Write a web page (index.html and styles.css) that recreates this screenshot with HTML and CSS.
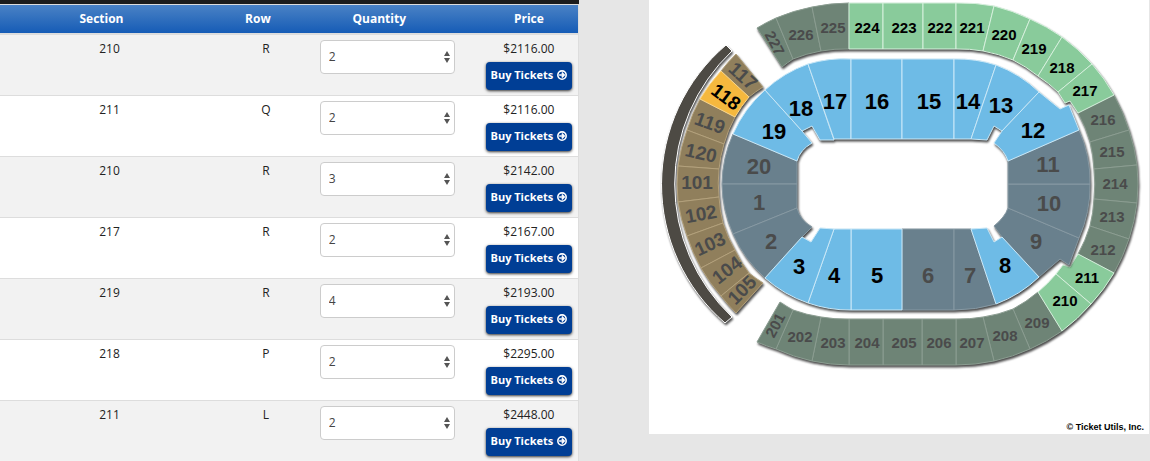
FILE: index.html
```html
<!DOCTYPE html>
<html lang="en">
<head>
    <meta charset="UTF-8">
    <meta name="viewport" content="width=device-width, initial-scale=1.0">
    <title>Tickets</title>
    <link rel="stylesheet" href="styles.css">
</head>
<body>
    <!-- shared icons -->
    <svg class="sprite" aria-hidden="true">
        <symbol id="icon-arrow" viewBox="0 0 12 12">
            <circle cx="6" cy="6" r="5" fill="none" stroke="currentColor" stroke-width="1.9"/>
            <path d="M2.6 6H8.2M5.8 3.2L8.6 6L5.8 8.8" fill="none" stroke="currentColor" stroke-width="1.9"/>
        </symbol>
        <symbol id="icon-updown" viewBox="0 0 6 12">
            <path d="M3 0L6 5H0ZM3 12L0 7H6Z" fill="currentColor"/>
        </symbol>
    </svg>

    <div class="page">
        <div class="listing">
            <table class="tickets">
                <thead>
                    <tr>
                        <th class="col-section sortable">Section</th>
                        <th class="col-row sortable">Row</th>
                        <th class="col-qty sortable">Quantity</th>
                        <th class="col-price">Price</th>
                    </tr>
                </thead>
                <tbody>
                    <tr>
                        <td class="col-section">210</td>
                        <td>R</td>
                        <td><div class="qty"><select aria-label="Quantity"><option>2</option></select><svg><use href="#icon-updown"/></svg></div></td>
                        <td class="col-price">$2116.00 <button class="buy">Buy Tickets <svg><use href="#icon-arrow"/></svg></button></td>
                    </tr>
                    <tr>
                        <td class="col-section">211</td>
                        <td>Q</td>
                        <td><div class="qty"><select aria-label="Quantity"><option>2</option></select><svg><use href="#icon-updown"/></svg></div></td>
                        <td class="col-price">$2116.00 <button class="buy">Buy Tickets <svg><use href="#icon-arrow"/></svg></button></td>
                    </tr>
                    <tr>
                        <td class="col-section">210</td>
                        <td>R</td>
                        <td><div class="qty"><select aria-label="Quantity"><option>3</option></select><svg><use href="#icon-updown"/></svg></div></td>
                        <td class="col-price">$2142.00 <button class="buy">Buy Tickets <svg><use href="#icon-arrow"/></svg></button></td>
                    </tr>
                    <tr>
                        <td class="col-section">217</td>
                        <td>R</td>
                        <td><div class="qty"><select aria-label="Quantity"><option>2</option></select><svg><use href="#icon-updown"/></svg></div></td>
                        <td class="col-price">$2167.00 <button class="buy">Buy Tickets <svg><use href="#icon-arrow"/></svg></button></td>
                    </tr>
                    <tr>
                        <td class="col-section">219</td>
                        <td>R</td>
                        <td><div class="qty"><select aria-label="Quantity"><option>4</option></select><svg><use href="#icon-updown"/></svg></div></td>
                        <td class="col-price">$2193.00 <button class="buy">Buy Tickets <svg><use href="#icon-arrow"/></svg></button></td>
                    </tr>
                    <tr>
                        <td class="col-section">218</td>
                        <td>P</td>
                        <td><div class="qty"><select aria-label="Quantity"><option>2</option></select><svg><use href="#icon-updown"/></svg></div></td>
                        <td class="col-price">$2295.00 <button class="buy">Buy Tickets <svg><use href="#icon-arrow"/></svg></button></td>
                    </tr>
                    <tr>
                        <td class="col-section">211</td>
                        <td>L</td>
                        <td><div class="qty"><select aria-label="Quantity"><option>2</option></select><svg><use href="#icon-updown"/></svg></div></td>
                        <td class="col-price">$2448.00 <button class="buy">Buy Tickets <svg><use href="#icon-arrow"/></svg></button></td>
                    </tr>
                </tbody>
            </table>
        </div>

        <div class="map">
            <svg viewBox="649 0 500 434" role="img" aria-label="Seating chart">
                <!-- upper level, unavailable -->
                <g class="level upper">
                    <path d="M757 28A181 181 0 0 1 776 18L793 59A136 136 0 0 0 782 67Z"/>
                    <path d="M776 18A181 181 0 0 1 812 7L821 51A136 136 0 0 0 793 59Z"/>
                    <path d="M812 7A181 181 0 0 1 849 3V49A136 136 0 0 0 821 51Z"/>
                    <path d="M1114 95A181 181 0 0 1 1129 130L1090 142A136 136 0 0 0 1078 113Z"/>
                    <path d="M1129 130A181 181 0 0 1 1137 165L1094 169A136 136 0 0 0 1090 142Z"/>
                    <path d="M1137 165A181 181 0 0 1 1137 203L1094 199A136 136 0 0 0 1094 169Z"/>
                    <path d="M1137 203A181 181 0 0 1 1129 239L1090 226A136 136 0 0 0 1094 199Z"/>
                    <path d="M1129 239A181 181 0 0 1 1114 273L1078 254A136 136 0 0 0 1090 226Z"/>
                    <path d="M1062 331A181 181 0 0 1 1030 349L1013 309A136 136 0 0 0 1038 292Z"/>
                    <path d="M1030 349A181 181 0 0 1 994 361L983 317A136 136 0 0 0 1013 309Z"/>
                    <path d="M994 361A181 181 0 0 1 956 365V319A136 136 0 0 0 983 317Z"/>
                    <path d="M922 319H956V365H922Z"/>
                    <path d="M883 319H922V365H883Z"/>
                    <path d="M849 319H883V365H849Z"/>
                    <path d="M849 365A181 181 0 0 1 812 361L821 317A136 136 0 0 0 849 319Z"/>
                    <path d="M812 361A181 181 0 0 1 776 349L793 310A136 136 0 0 0 821 317Z"/>
                    <path d="M776 349A181 181 0 0 1 757 342L780 302A136 136 0 0 0 793 310Z"/>
                    <!-- available -->
                    <g class="open">
                        <path d="M849 3H883V49H849Z"/>
                        <path d="M883 3H923V49H883Z"/>
                        <path d="M923 3H956V49H923Z"/>
                        <path d="M956 3A181 181 0 0 1 994 6L983 51A136 136 0 0 0 956 49Z"/>
                        <path d="M994 6A181 181 0 0 1 1030 19L1013 60A136 136 0 0 0 983 51Z"/>
                        <path d="M1030 19A181 181 0 0 1 1062 37L1038 76A136 136 0 0 0 1013 60Z"/>
                        <path d="M1062 37A181 181 0 0 1 1092 64L1058 92A136 136 0 0 0 1038 76Z"/>
                        <path d="M1092 64A181 181 0 0 1 1114 95L1078 113L1070 101L1065 103L1058 92Z"/>
                        <path d="M1114 273A181 181 0 0 1 1091 304L1056 274L1063 265L1070 267L1078 254Z"/>
                        <path d="M1091 304A181 181 0 0 1 1062 331L1038 292A136 136 0 0 0 1056 274Z"/>
                    </g>
                </g>

                <!-- suites -->
                <path class="level suites" d="M726 45A183 183 0 0 0 725 323L732 317A183 183 0 0 1 732 51Z"/>

                <!-- club level -->
                <g class="level club">
                    <path d="M736 54A171 171 0 0 0 721 71L749 97A129 129 0 0 1 763 87Z"/>
                    <path d="M700 99A171 171 0 0 0 687 130L724 144A129 129 0 0 1 735 117Z"/>
                    <path d="M687 130A171 171 0 0 0 678 166L719 169A129 129 0 0 1 724 144Z"/>
                    <path d="M678 166A171 171 0 0 0 678 202L719 197A129 129 0 0 1 719 169Z"/>
                    <path d="M678 202A171 171 0 0 0 687 236L723 223A129 129 0 0 1 719 197Z"/>
                    <path d="M687 236A171 171 0 0 0 701 268L735 250A129 129 0 0 1 723 223Z"/>
                    <path d="M701 268A171 171 0 0 0 721 296L749 273A129 129 0 0 1 735 250Z"/>
                    <path d="M721 296A171 171 0 0 0 736 313L763 283A129 129 0 0 1 749 273Z"/>
                    <g class="open">
                        <path d="M721 71A171 171 0 0 0 700 99L735 117A129 129 0 0 1 749 97Z"/>
                    </g>
                </g>

                <!-- lower level -->
                <g class="level lower">
                    <path d="M733 134A126 126 0 0 0 722 184H797V161Z"/>
                    <path d="M722 184A126 126 0 0 0 733 234L797 208V184Z"/>
                    <path d="M733 234A126 126 0 0 0 765 278L802 237L812 227Q800 220 797 208Z"/>
                    <path d="M902 229H954V310H902Z"/>
                    <path d="M954 229H971L996 304Q976 310 954 310Z"/>
                    <path d="M1039 277L1060 259L1069 265L1079 238L1008 208Q1005 217 994 226L1002 237Z"/>
                    <path d="M1090 184A126 126 0 0 1 1079 238L1008 208V184Z"/>
                    <path d="M1079 130A126 126 0 0 1 1090 184H1008V161Z"/>
                    <g class="open">
                        <path d="M765 90A126 126 0 0 0 733 134L797 161Q800 150 812 143L802 131Z"/>
                        <path d="M808 64A126 126 0 0 0 765 90L802 131L812 126L820 140H834Z"/>
                        <path d="M851 59A126 126 0 0 0 808 64L834 139H851Z"/>
                        <path d="M851 59H902V139H851Z"/>
                        <path d="M902 59H954V139H902Z"/>
                        <path d="M954 59A126 126 0 0 1 996 65L971 139H954Z"/>
                        <path d="M996 65A126 126 0 0 1 1039 92L1002 131L994 126L987 140L971 139Z"/>
                        <path d="M1039 92L1060 109L1069 105L1079 130L1008 161Q1005 151 994 143L1002 131Z"/>
                        <path d="M971 229L987 228L994 242L1002 237L1039 277A126 126 0 0 1 996 304Z"/>
                        <path d="M851 229H902V310H851Z"/>
                        <path d="M834 229H851V310A126 126 0 0 1 808 303Z"/>
                        <path d="M765 278A126 126 0 0 0 808 303L834 229L820 228L811 242L802 237Z"/>
                    </g>
                </g>

                <g class="labels labels-upper">
                    <text transform="translate(775 43) rotate(62)">227</text>
                    <text x="801" y="34">226</text>
                    <text x="833" y="27">225</text>
                    <text x="1103" y="119">216</text>
                    <text x="1112" y="151">215</text>
                    <text x="1115" y="183">214</text>
                    <text x="1112" y="216">213</text>
                    <text x="1103" y="249">212</text>
                    <text x="1037" y="322">209</text>
                    <text x="1005" y="335">208</text>
                    <text x="972" y="342">207</text>
                    <text x="939" y="342">206</text>
                    <text x="904" y="342">205</text>
                    <text x="867" y="342">204</text>
                    <text x="833" y="342">203</text>
                    <text x="800" y="336">202</text>
                    <text transform="translate(775 325) rotate(-62)">201</text>
                    <g class="open">
                        <text x="867" y="27">224</text>
                        <text x="904" y="27">223</text>
                        <text x="940" y="27">222</text>
                        <text x="972" y="27">221</text>
                        <text x="1004" y="34">220</text>
                        <text x="1034" y="48">219</text>
                        <text x="1062" y="67">218</text>
                        <text x="1085" y="90">217</text>
                        <text x="1087" y="277">211</text>
                        <text x="1065" y="300">210</text>
                    </g>
                </g>

                <g class="labels labels-club">
                    <text transform="translate(743 76) rotate(42)">117</text>
                    <text class="open" transform="translate(726 97) rotate(37)">118</text>
                    <text transform="translate(710 123) rotate(20)">119</text>
                    <text transform="translate(701 153) rotate(13)">120</text>
                    <text x="697" y="182">101</text>
                    <text transform="translate(701 214) rotate(-10)">102</text>
                    <text transform="translate(710 244) rotate(-25)">103</text>
                    <text transform="translate(727 270) rotate(-38)">104</text>
                    <text transform="translate(742 290) rotate(-45)">105</text>
                </g>

                <g class="labels labels-lower">
                    <text x="759" y="166">20</text>
                    <text x="759" y="202">1</text>
                    <text x="771" y="241">2</text>
                    <text x="928" y="275">6</text>
                    <text x="970" y="275">7</text>
                    <text x="1036" y="241">9</text>
                    <text x="1049" y="203">10</text>
                    <text x="1048" y="164">11</text>
                    <g class="open">
                        <text x="774" y="131">19</text>
                        <text x="801" y="108">18</text>
                        <text x="835" y="101">17</text>
                        <text x="877" y="101">16</text>
                        <text x="929" y="101">15</text>
                        <text x="968" y="101">14</text>
                        <text x="1001" y="105">13</text>
                        <text x="1033" y="130">12</text>
                        <text x="1005" y="265">8</text>
                        <text x="877" y="275">5</text>
                        <text x="834" y="275">4</text>
                        <text x="799" y="266">3</text>
                    </g>
                </g>
            </svg>
            <p class="credit">© Ticket Utils, Inc.</p>
        </div>
    </div>
</body>
</html>
```
FILE: styles.css
```css
body {
    margin: 0;
    background: #e6e6e6;
    color: #222;
    font-family: "Open Sans", "Noto Sans", sans-serif;
    font-size: 12px;
    line-height: 18px;
}

.sprite {
    display: none;
}

.page {
    display: grid;
    grid-template-columns: 579fr 500fr;
    column-gap: 70px;
    align-items: start;
    padding-right: 1px;
    height: 100vh;
    overflow: hidden;
}

/* Ticket list */
.listing {
    border-top: 4px solid #1c1c1c;
}

.tickets {
    width: 100%;
    table-layout: fixed;
    border-collapse: separate;
    border-spacing: 0;
    border-top: 1px solid #ddd;
    border-right: 1px solid #ddd;
    background: #fff;
    text-align: center;
}

.tickets thead tr {
    background: linear-gradient(#4a82c5, #1259b5);
}

.tickets th {
    box-sizing: border-box;
    height: 30px;
    padding: 0;
    border-bottom: 2px solid #ddd;
    background-clip: padding-box;
    color: #fff;
    font-weight: bold;
}

.tickets th.sortable {
    padding-right: 16px;
}

.tickets td {
    box-sizing: border-box;
    height: 61px;
    padding: 5px 0 4px;
    border-bottom: 1px solid #ddd;
    vertical-align: top;
}

.tickets tbody tr:nth-child(odd) {
    background: #f2f2f2;
}

.tickets .col-section {
    width: 41%;
    padding-right: 18px;
}

.tickets th.col-section {
    padding-right: 34px;
}

.col-row {
    width: 10%;
}

.col-qty {
    width: 32%;
}

.qty {
    position: relative;
    width: 135px;
    margin: 0 auto;
}

.qty select {
    display: block;
    appearance: none;
    width: 100%;
    height: 34px;
    padding: 0 8px;
    border: 1px solid #ccc;
    border-radius: 4px;
    background: #fff;
    color: #444;
    font: inherit;
}

.qty svg {
    position: absolute;
    top: 11px;
    right: 5px;
    width: 6px;
    height: 12px;
    color: #555;
    pointer-events: none;
}

.buy {
    display: flex;
    align-items: center;
    justify-content: center;
    gap: 4px;
    width: 86px;
    height: 28px;
    margin: 4px auto 0;
    padding: 0 0 2px;
    border: 0;
    border-radius: 4px;
    background: #003e95;
    box-shadow: 0 1px 3px rgba(0, 0, 0, 0.8);
    color: #fff;
    font: bold 11px/18px "Open Sans", "Noto Sans", sans-serif;
    white-space: nowrap;
}

.buy svg {
    width: 10px;
    height: 10px;
}

/* Seating chart */
.map {
    position: relative;
    background: #fff;
}

.map svg {
    display: block;
    width: 100%;
}

.credit {
    position: absolute;
    right: 5px;
    bottom: 0;
    margin: 0;
    color: #000;
    font: bold 9px/14px "Liberation Sans", Arial, sans-serif;
}

.level {
    stroke-width: 1;
    stroke-linejoin: round;
    filter: drop-shadow(1px 2px 1px rgba(0, 0, 0, 0.7));
}

.upper {
    fill: #6e8476;
    stroke: #8b9d91;
}

.upper .open {
    fill: #89cb9b;
    stroke: #d5f0dc;
}

.club {
    fill: #907f5c;
    stroke: #b3a17c;
}

.club .open {
    fill: #f5b83e;
    stroke: #f8d58c;
}

.lower {
    fill: #69808d;
    stroke: #8799a3;
}

.lower .open {
    fill: #6ebbe6;
    stroke: #c9e8f8;
}

.suites {
    fill: #4d4a44;
    stroke: #fff;
}

.labels {
    fill: #4a4b4b;
    font-family: "Liberation Sans", Arial, sans-serif;
    font-weight: bold;
    text-anchor: middle;
    dominant-baseline: central;
}

.labels .open {
    fill: #000;
}

.labels-upper {
    font-size: 15px;
}

.labels-club {
    font-size: 19px;
}

.labels-lower {
    font-size: 22px;
}
```
